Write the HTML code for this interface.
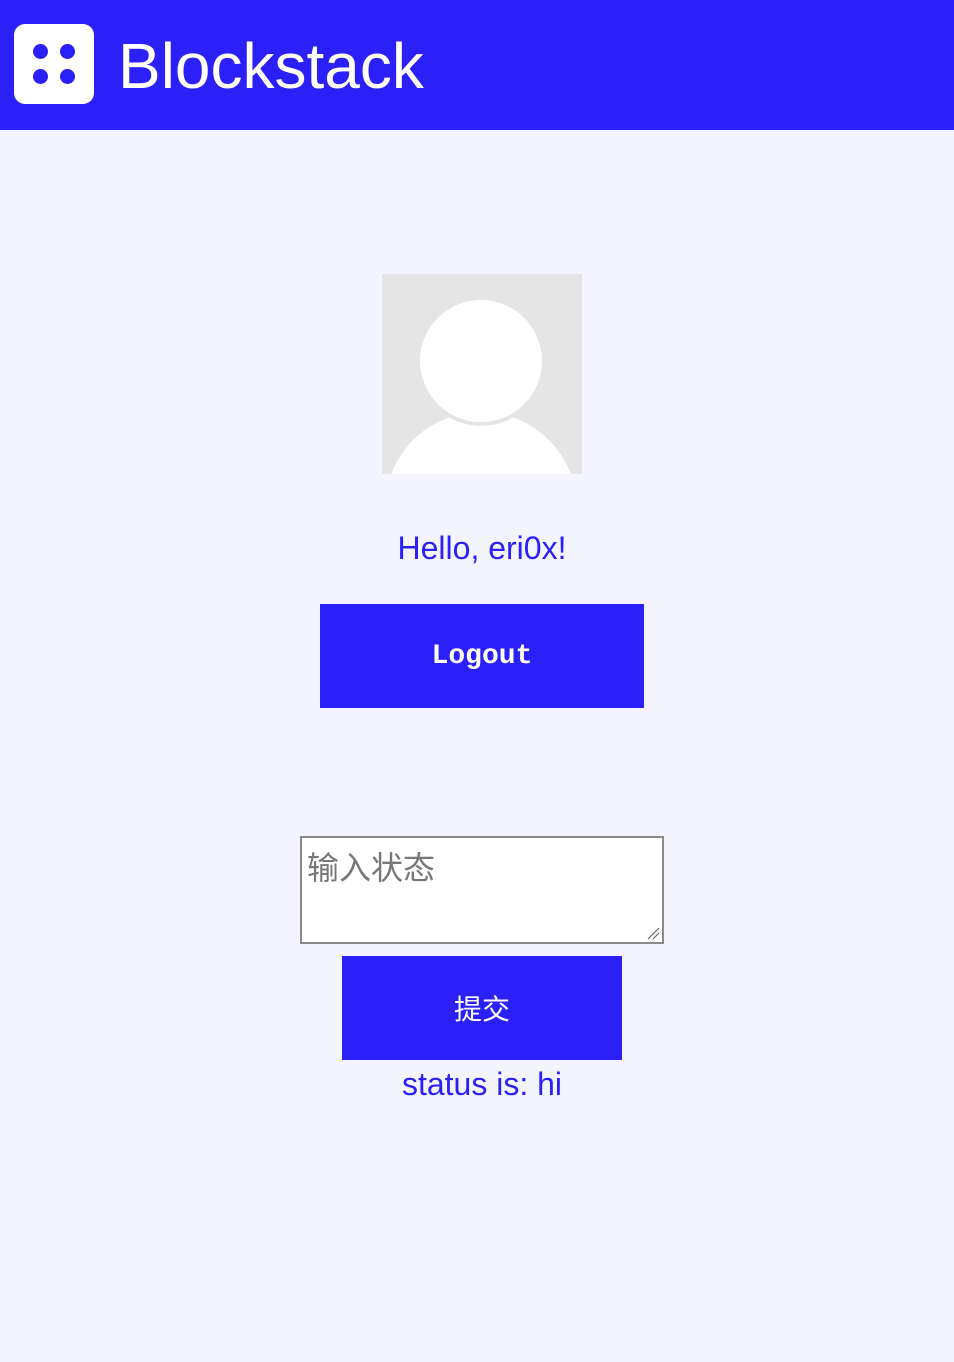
<!DOCTYPE html>
<html><head><meta charset="utf-8"><style>
body{margin:0;background:#f3f4fd;width:954px;height:1362px;position:relative;font-family:"Liberation Sans","Noto Sans CJK SC",sans-serif;overflow:hidden}
.hdr{position:absolute;left:0;top:0;width:954px;height:130px;background:#2c20f8}
.logo{position:absolute;left:14px;top:24px;width:80px;height:80px;background:#fff;border-radius:11px}
.dot{position:absolute;width:15px;height:15px;border-radius:50%;background:#2c20f8}
.title{position:absolute;left:118px;top:28px;font-size:64px;color:#fff;line-height:76px}
.c{position:absolute;left:0;width:964px;text-align:center;color:#2c20f8}
.btn{position:absolute;background:#2c20f8;color:#fff;display:flex;align-items:center;justify-content:center}
</style></head><body>
<div class="hdr">
<div class="logo">
<div class="dot" style="left:19px;top:20px"></div><div class="dot" style="left:46px;top:20px"></div>
<div class="dot" style="left:19px;top:45px"></div><div class="dot" style="left:46px;top:45px"></div>
</div>
<div class="title">Blockstack</div>
</div>
<svg style="position:absolute;left:382px;top:274px" width="200" height="200">
<rect width="200" height="200" fill="#e5e5e5"/>
<circle cx="99" cy="234" r="96" fill="#fff"/>
<circle cx="99" cy="87" r="63" fill="#fff" stroke="#e5e5e5" stroke-width="4"/>
</svg>
<div class="c" style="top:529px;font-size:32px;line-height:38px">Hello, eri0x!</div>
<div class="btn" style="left:320px;top:604px;width:324px;height:104px;font-family:'Liberation Mono',monospace;font-weight:bold;font-size:28px">Logout</div>
<div style="position:absolute;left:300px;top:836px;width:360px;height:104px;border:2px solid #8a8a8a;background:#fff">
<div style="position:absolute;left:5px;top:9px;font-size:32px;color:#777;font-family:'Noto Sans CJK SC',sans-serif;line-height:38px">输入状态</div>
<svg style="position:absolute;right:2px;bottom:2px" width="14" height="14"><path d="M2 13L13 2M7 13L13 7" stroke="#666" stroke-width="1.2"/></svg>
</div>
<div class="btn" style="left:342px;top:956px;width:280px;height:104px;font-size:28px;font-family:'Noto Sans CJK SC',sans-serif">提交</div>
<div class="c" style="top:1065px;font-size:32px;line-height:38px">status is: hi</div>
</body></html>
